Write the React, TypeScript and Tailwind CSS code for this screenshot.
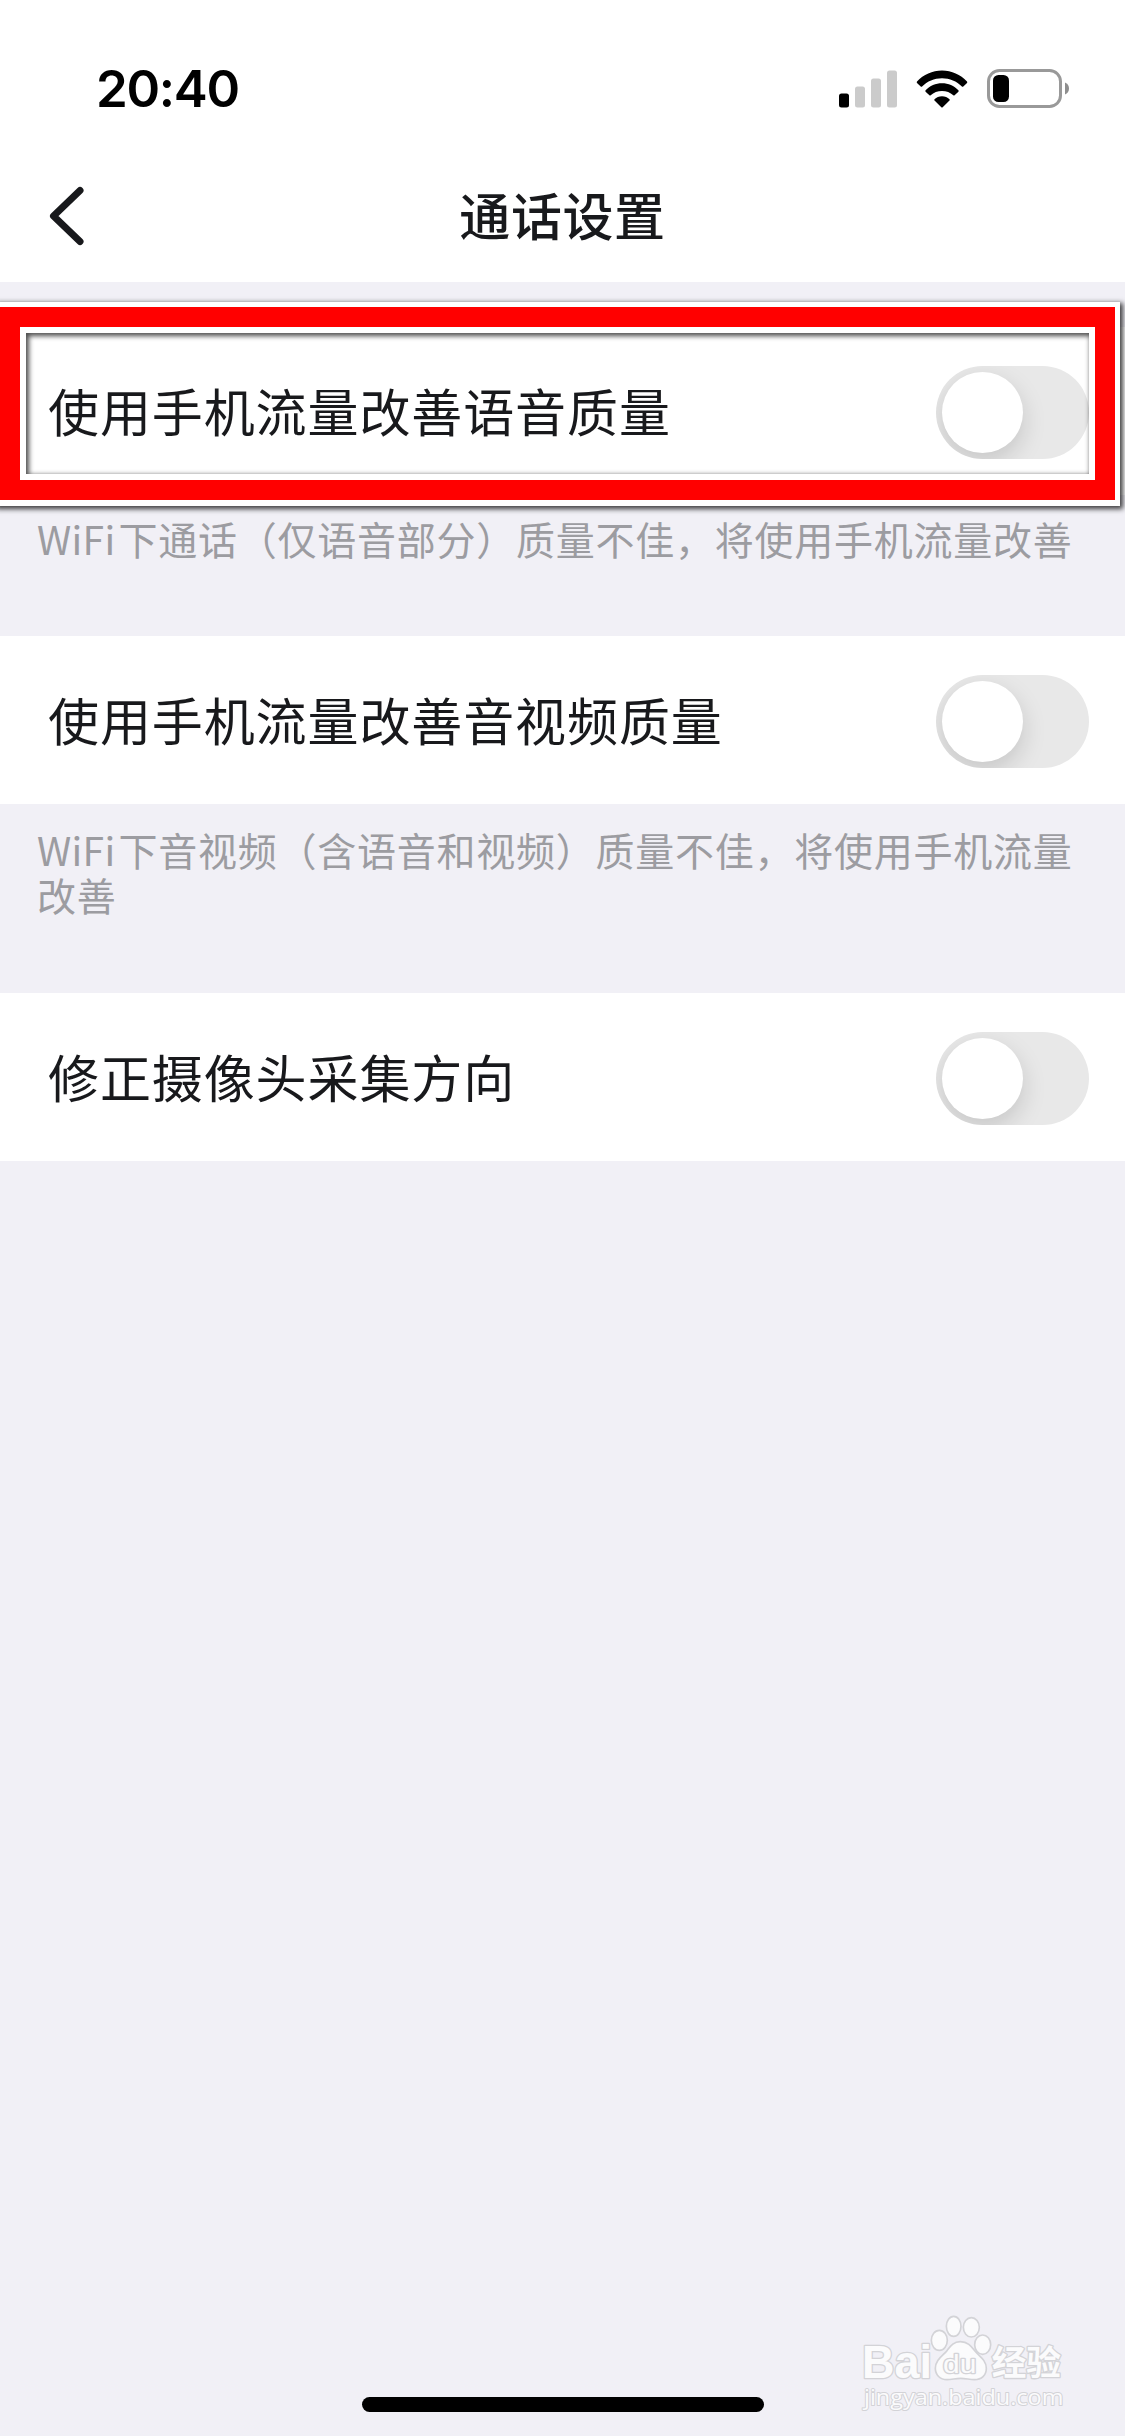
import { useState } from 'react';

const settings = [
  {
    name: '使用手机流量改善语音质量',
    note: '下通话（仅语音部分）质量不佳，将使用手机流量改善',
    noteStyle: 'h-[141px] pt-[21px]',
  },
  {
    name: '使用手机流量改善音视频质量',
    note: '下音视频（含语音和视频）质量不佳，将使用手机流量改善',
    noteStyle: 'h-[189px] pt-[23px]',
  },
  { name: '修正摄像头采集方向', note: '', noteStyle: '' },
];

const SignalIcon = () => (
  <svg className="h-[38px] w-[58px]" viewBox="0 0 58 38">
    <rect x="0" y="23.5" width="10" height="14" rx="2.5" fill="#000" />
    <rect x="16" y="16.5" width="10" height="21" rx="2.5" fill="#cbcbcb" />
    <rect x="32" y="8.5" width="10" height="29" rx="2.5" fill="#cbcbcb" />
    <rect x="48" y="0.5" width="10" height="37" rx="2.5" fill="#cbcbcb" />
  </svg>
);

const WifiIcon = () => (
  <svg className="h-[38px] w-[52px]" viewBox="0 0 52 38">
    <path d="M1 11.6C7.5 4.5 16.3.5 26 .5s18.5 4 25 11.1c.4.4.4 1 0 1.4l-3.7 3.500c-.4.4-1 .4-1.4 0C40.800 11.200 33.700 8.200 26 8.200S11.200 11.200 6.100 16.500c-.4.4-1 .4-1.4 0L1 13c-.4-.4-.4-1 0-1.400z" />
    <path d="M9.600 20.300C13.900 15.900 19.600 13.300 26 13.300s12.100 2.600 16.400 7c.4.4.4 1 0 1.400l-3.800 3.500c-.4.4-.9.4-1.300 0C34.300 22.500 30.400 21 26 21s-8.300 1.500-11.300 4.200c-.4.4-.9.4-1.300 0l-3.800-3.500c-.4-.4-.4-1 0-1.400z" />
    <path d="M18.500 29.200c2-1.900 4.600-3 7.500-3s5.500 1.100 7.500 3c.4.4.4.9 0 1.300l-6.800 6.700c-.4.4-1 .4-1.4 0l-6.800-6.700c-.4-.4-.4-.9 0-1.300z" />
  </svg>
);

const BatteryIcon = () => (
  <svg className="h-[39px] w-[82px]" viewBox="0 0 82 39">
    <rect x="1.5" y="1.5" width="72" height="36" rx="11" fill="none" stroke="#999" strokeWidth="3" />
    <rect x="6" y="6" width="16" height="27" rx="5.5" fill="#000" />
    <path d="M78 13.500c2.500 1 4 3.300 4 6s-1.500 5-4 6z" fill="#8e8e8e" />
  </svg>
);

const Watermark = () => (
  <svg className="absolute top-[2290px] left-[840px] h-[146px] w-[285px]" viewBox="0 0 855 438">
    <g fill="#fbfbfc" stroke="#d3d3d7" strokeWidth="5" strokeLinejoin="round">
      <ellipse cx="298" cy="151" rx="24" ry="30" />
      <ellipse cx="341" cy="109" rx="22" ry="30" />
      <ellipse cx="394" cy="112" rx="24" ry="29" />
      <ellipse cx="428" cy="164" rx="24" ry="29" />
      <path d="M361 155c-22 0-30 14-40 27-12 15-35 27-35 53 0 20 14 34 35 34 15 0 25-4 41-4s26 4 41 4c22 0 36-13 36-34 0-26-24-38-36-54-10-13-20-26-42-26z" />
    </g>
    <g
      className="[paint-order:stroke]"
      fill="#fbfbfc"
      stroke="#d3d3d7"
      strokeWidth="8"
      strokeLinejoin="round"
      fontFamily='"Liberation Sans", sans-serif'
    >
      <text x="66" y="264" fontSize="138" fontWeight="700" textLength="210" lengthAdjust="spacingAndGlyphs">
        Bai
      </text>
      <text x="455" y="256" fontSize="104" fontWeight="700" textLength="208" fontFamily='"Noto Sans CJK SC", sans-serif'>
        经验
      </text>
      <text x="309" y="249" fontSize="80" textLength="100" lengthAdjust="spacingAndGlyphs">
        du
      </text>
      <text
        x="72"
        y="345"
        fontSize="68"
        fontFamily='"Open Sans", sans-serif'
        strokeWidth="6"
        textLength="598"
        lengthAdjust="spacingAndGlyphs"
      >
        jingyan.baidu.com
      </text>
    </g>
  </svg>
);

const Toggle = ({ label }: { label: string }) => {
  const [on, setOn] = useState(false);

  return (
    <button
      type="button"
      role="switch"
      aria-checked={on}
      aria-label={label}
      onClick={() => setOn(!on)}
      className={`mt-[3px] flex h-[93px] w-[153px] shrink-0 items-center overflow-hidden rounded-full px-1.5 ${
        on ? 'justify-end bg-[#0099ff]' : 'bg-[#e8e8e8]'
      }`}
    >
      <span className="size-[81px] rounded-full bg-white shadow-[0_9px_24px_rgba(0,0,0,0.15)]" />
    </button>
  );
};

export default function App() {
  return (
    <div className="relative flex h-[2436px] w-[1125px] flex-col overflow-hidden bg-[#f1f0f6] font-['Noto_Sans_CJK_SC',sans-serif] text-[#18191c]">
      <header className="h-[282px] bg-white">
        <div className="flex h-[132px] items-end justify-between pr-[56px] pb-6 pl-24">
          <span className="mb-[-12px] font-['Inter',sans-serif] text-[51px] leading-[62px] font-semibold tracking-[-1.3px] text-black">
            20:40
          </span>
          <div className="flex items-center gap-[19px]">
            <SignalIcon />
            <WifiIcon />
            <BatteryIcon />
          </div>
        </div>
        <div className="grid h-[168px] grid-cols-3 items-center px-[49px]">
          <svg className="h-[60px] w-[36px]" viewBox="0 0 36 60" fill="none">
            <path d="M31 4.500L4.500 30L31 55.500" stroke="#18191c" strokeWidth="7" strokeLinecap="round" strokeLinejoin="round" />
          </svg>
          <h1 className="pb-[5px] text-center text-[51px] leading-[72px] font-medium tracking-[0.6px] whitespace-nowrap">
            通话设置
          </h1>
        </div>
      </header>

      <main className="mt-[45px]">
        {settings.map((item) => (
          <section key={item.name}>
            <div className="flex h-[168px] items-center justify-between bg-white pr-9 pl-12">
              <span className="pb-[3px] text-[51px] leading-[72px] tracking-[0.9px] whitespace-nowrap">{item.name}</span>
              <Toggle label={item.name} />
            </div>
            {item.note && (
              <p className={`pr-10 pl-[37px] text-[39px] leading-[45px] tracking-[0.75px] text-[#9c9ca1] ${item.noteStyle}`}>
                <span className="mr-[3px] tracking-[0.3px]">WiFi</span>
                {item.note}
              </p>
            )}
          </section>
        ))}
      </main>

      {/* highlight frame over the first row */}
      <div className="absolute top-[302px] -left-[5px] h-[204px] w-[1125px] border-[5px] border-b-[6px] border-white shadow-[2px_2px_5px_1px_rgba(0,0,0,0.75)]">
        <div className="h-full border-[20px] border-[#ff0000]">
          <div className="h-full border-[6px] border-white">
            <div className="h-full shadow-[inset_2px_2px_5px_1px_rgba(0,0,0,0.7)]" />
          </div>
        </div>
      </div>

      <Watermark />

      <div className="mx-auto mt-auto mb-6 h-[15px] w-[402px] rounded-full bg-black" />
    </div>
  );
}
